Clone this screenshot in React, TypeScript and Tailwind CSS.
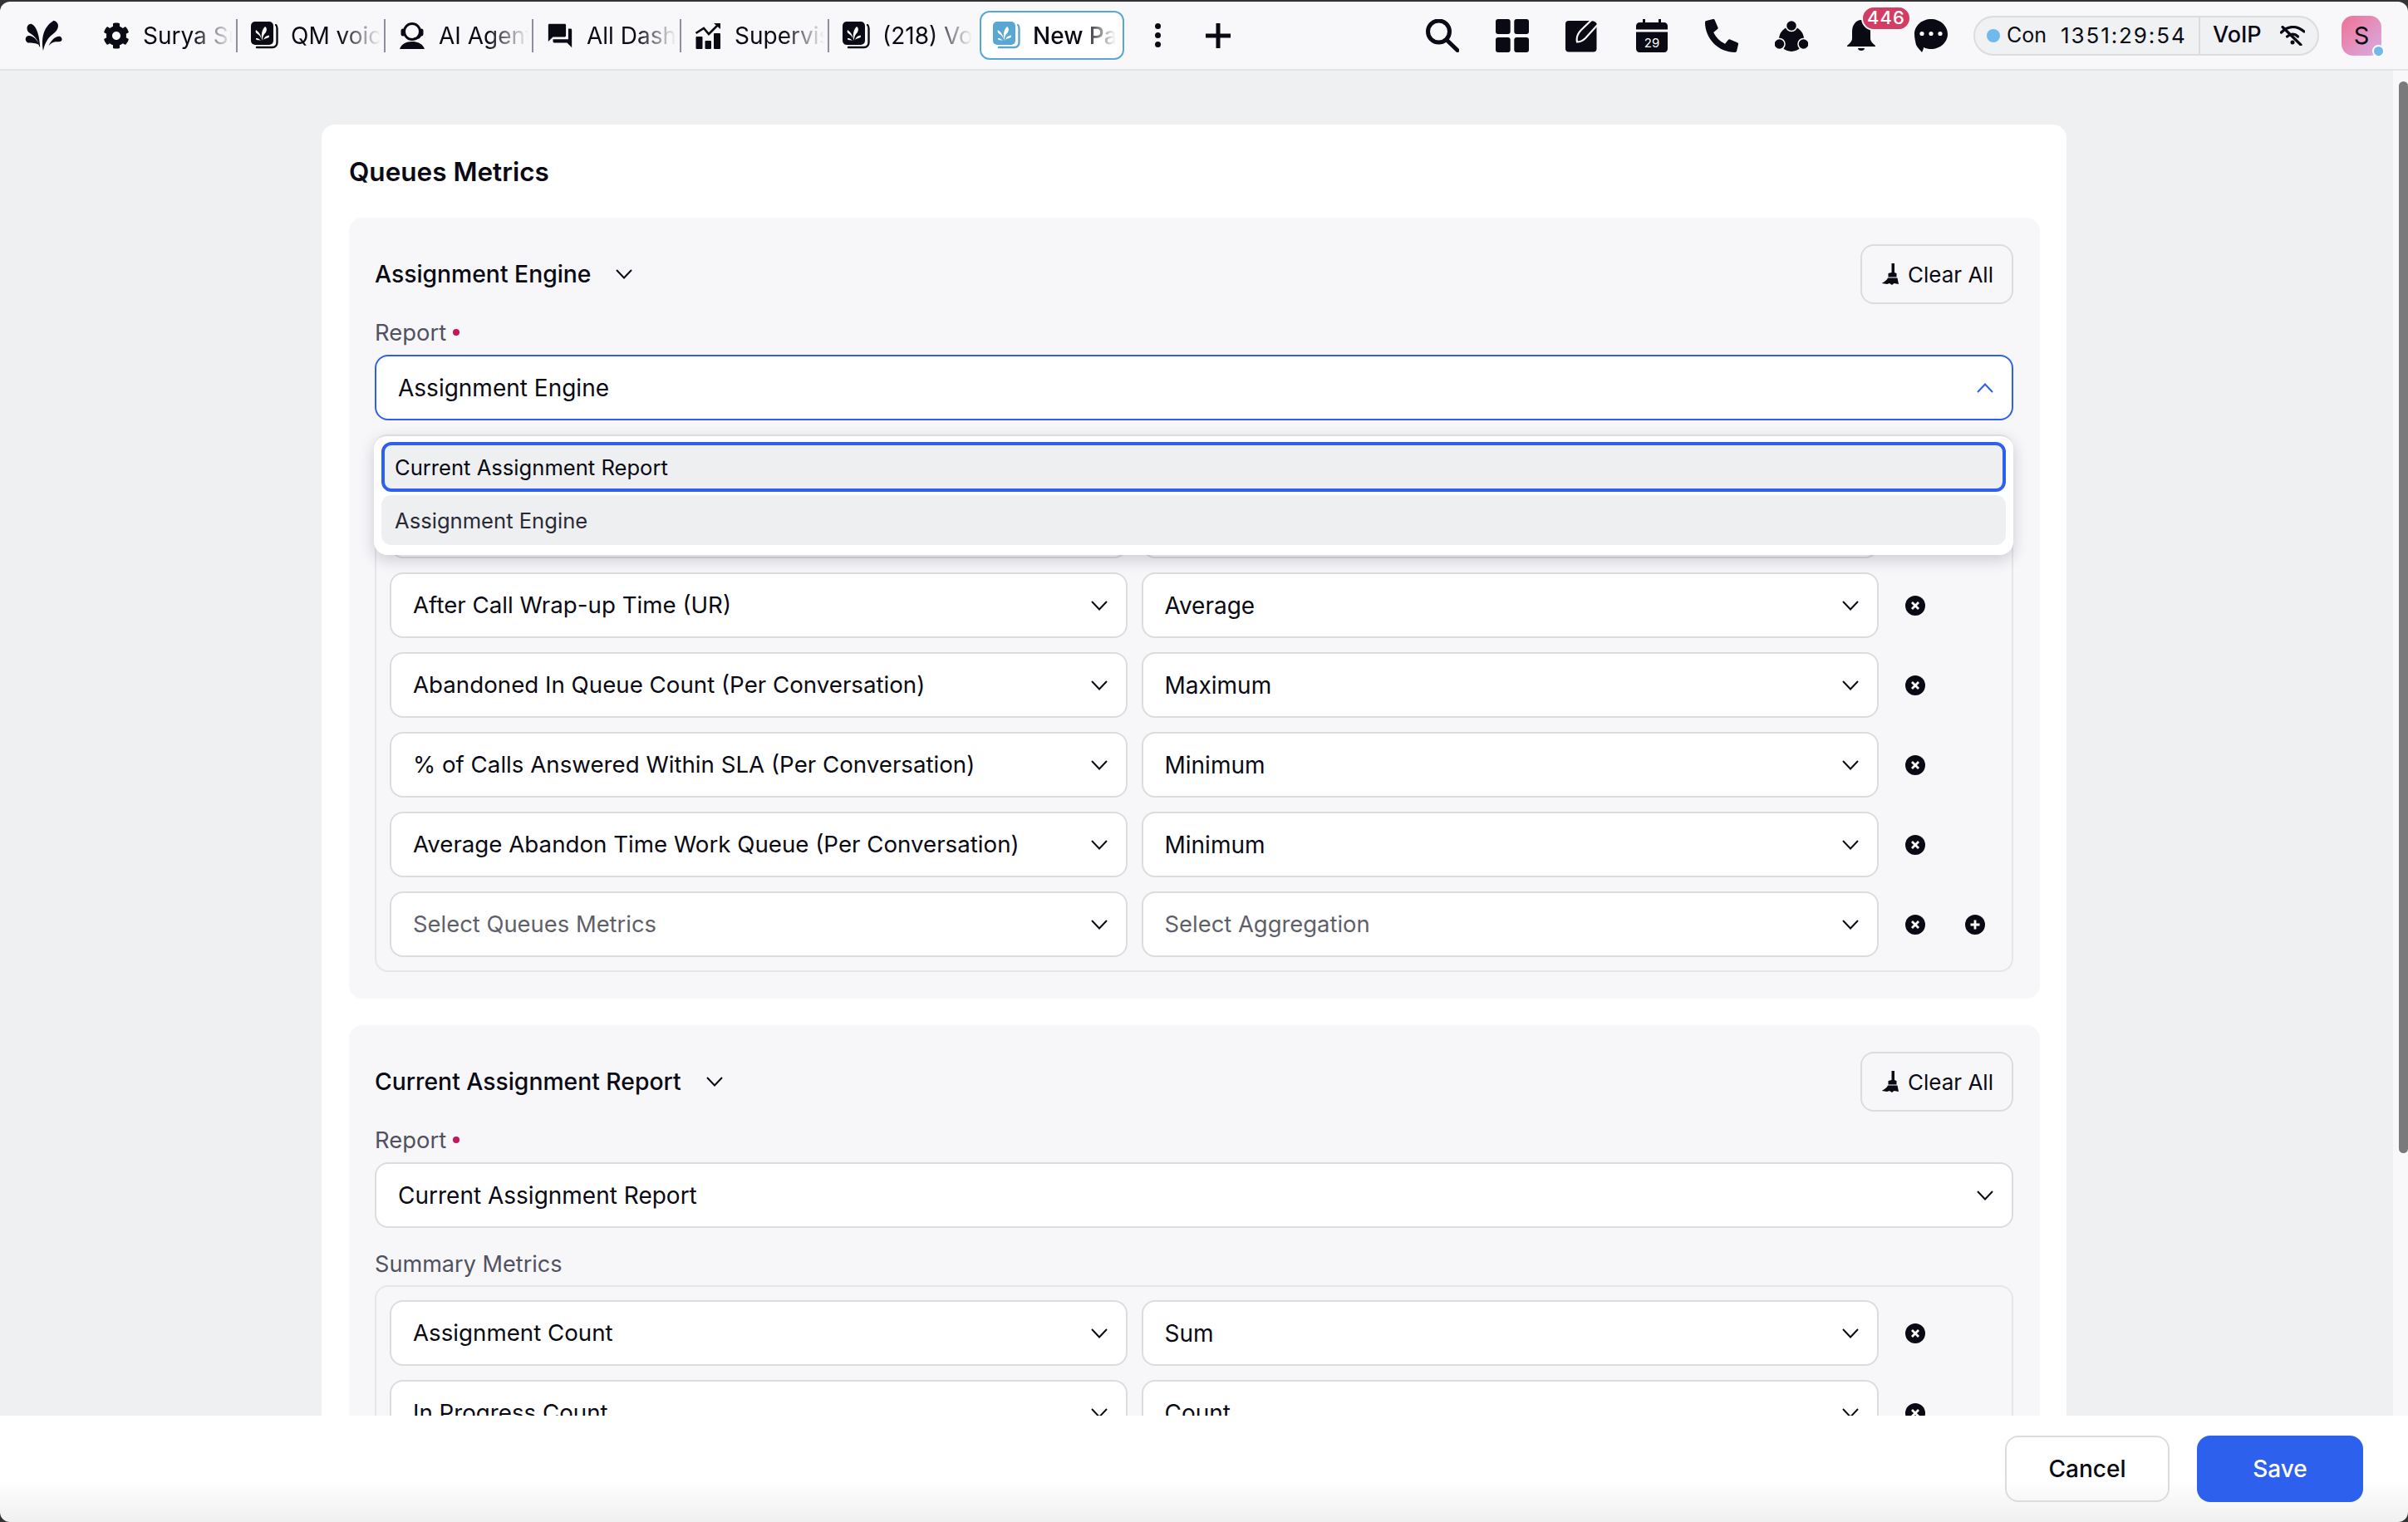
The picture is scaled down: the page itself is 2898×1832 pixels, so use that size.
import { FaCog, FaPhoneAlt } from 'react-icons/fa';
import { MdForum } from 'react-icons/md';

const BookIcon = ({ color = '#0a0a14' }: { color?: string }) => (
  <svg viewBox="0 0 33 33" className="h-[33px] w-[33px] shrink-0">
    <rect x="0" y="0" width="27" height="28" rx="5" fill={color} />
    <path d="M30 4c1 1 1.5 2 1.5 4v17c0 3-2 6-6 6H7" fill="none" stroke={color} strokeWidth="2.4" strokeLinecap="round" />
    <path d="M13.5 23C12 16 13 10 17 6c3 2 2 6 0 8-2 2-3 5-3.500 9z" fill="#fff" />
    <path d="M12.500 21C12 16 10 13 6 10c-1 2 0 4 2 5 2 1 3.500 3 4.500 6z" fill="#fff" />
    <path d="M15 22c1-3 3-5 6.500-5.500 1 1 .5 2.500-1 3-2 .5-4 1-5.500 2.500zM12 23c-1.500-2-3.500-3.500-6-3-.5 1.500 1 2.500 2.500 2.200 1.200-.2 2.500 0 3.500.8z" fill="#fff" />
  </svg>
);

const AgentIcon = () => (
  <svg viewBox="0 0 30 32" className="h-[32px] w-[30px] shrink-0">
    <circle cx="15" cy="11" r="9.500" fill="none" stroke="#0a0a14" strokeWidth="3" />
    <rect x="1.500" y="7.500" width="5" height="9" rx="2.500" fill="#0a0a14" />
    <rect x="23.500" y="7.500" width="5" height="9" rx="2.500" fill="#0a0a14" />
    <path d="M25 15c0 3-3 4.500-8 4.500" fill="none" stroke="#0a0a14" strokeWidth="2.400" />
    <path d="M0 32c2-6 8-9 15-9s13 3 15 9z" fill="#0a0a14" />
  </svg>
);

const SupervisorIcon = () => (
  <svg viewBox="0 0 30 32" className="h-[32px] w-[30px] shrink-0">
    <rect x="0.500" y="17" width="8" height="15" rx="1" fill="#0a0a14" />
    <rect x="11.500" y="22" width="7.500" height="10" rx="1" fill="#0a0a14" />
    <rect x="22" y="13" width="8" height="19" rx="1" fill="#0a0a14" />
    <path d="M0.500 13L10 7l6 7L27 3" fill="none" stroke="#0a0a14" strokeWidth="2.600" />
    <path d="M22 1h8v7z" fill="#0a0a14" />
  </svg>
);

const LogoIcon = () => (
  <svg viewBox="50 40 150 120" className="h-[38px] w-[48px] shrink-0" fill="#0a0a14">
    <path d="M125 157c-7-37-5-88 40-115 24 7 22 33-3 52-20 15-31 35-37 63z" />
    <path d="M110 142c-4-30-20-42-40-55-12-12-7-33 10-32 22 10 30 47 33 87h-3z" />
    <path d="M112 138c-15-14-30-8-45-11-14-7-11-27 4-27 17 0 32 17 41 38z" />
    <path d="M145 140c10-21 26-40 45-37 12 9 6 22-9 20-15-1-26 3-36 17z" />
  </svg>
);

const SearchIcon = () => (
  <svg viewBox="0 0 40 40" className="h-[40px] w-[40px]" fill="none" stroke="#0a0a14" strokeWidth="5" strokeLinecap="round">
    <circle cx="15.500" cy="15" r="13" />
    <path d="M25 25l13 12.500" />
  </svg>
);

const GridIcon = () => (
  <svg viewBox="0 0 40 40" className="h-[40px] w-[40px]" fill="#0a0a14">
    <rect width="17.700" height="18" rx="3" />
    <rect x="22.300" width="17.700" height="18" rx="3" />
    <rect y="22" width="17.700" height="18" rx="3" />
    <rect x="22.300" y="22" width="17.700" height="18" rx="3" />
  </svg>
);

const EditIcon = () => (
  <svg viewBox="0 0 40 40" className="h-[40px] w-[40px]">
    <rect x="0" y="2" width="37.500" height="37.500" rx="4" fill="#0a0a14" />
    <path d="M14 27.500c-1.500-7 1.500-11 5-14.500L31 1.500c3-1.500 8 2 8 5L24 23c-3 3-6 4.500-10 4.500z" fill="#0a0a14" stroke="#f8f8fb" strokeWidth="2.200" />
  </svg>
);

const CalendarIcon = () => (
  <svg viewBox="0 0 40 40" className="h-[40px] w-[40px]">
    <path d="M9 0h3v5H9zM28 0h3v5h-3z" fill="#0a0a14" />
    <path d="M1 8c0-2 2-4 4-4h30c2 0 4 2 4 4v4.500H1z" fill="#0a0a14" />
    <path d="M1 15.500h38V36c0 2-2 4-4 4H5c-2 0-4-2-4-4z" fill="#0a0a14" />
    <text x="20" y="33.500" textAnchor="middle" fontSize="15" fill="#fff">29</text>
  </svg>
);

const TeamIcon = () => (
  <svg viewBox="0 0 40 40" className="h-[40px] w-[40px]" fill="#0a0a14" stroke="#f8f8fb" strokeWidth="1.500">
    <circle cx="20" cy="24" r="15" stroke="none" />
    <circle cx="20" cy="8" r="6.500" />
    <circle cx="5.500" cy="30" r="6.500" />
    <circle cx="34.500" cy="30" r="6.500" />
  </svg>
);

const BellIcon = () => (
  <svg viewBox="0 0 34 38" className="h-[38px] w-[34px]" fill="#0a0a14">
    <path d="M17 0C10 0 6 7 6 14v8c0 4-3 6-6 9v1h34v-1c-3-3-6-5-6-9v-8c0-7-4-14-11-14z" />
    <path d="M13 34h8c0 4-8 4-8 0z" />
  </svg>
);

const ChatIcon = () => (
  <svg viewBox="0 0 40 40" className="h-[40px] w-[40px]">
    <path d="M20 0c11 0 20 8 20 18s-9 18-20 18c-3 0-6-.5-9-2 0 2-1 4-2 6-2-3-5-5-7-9-1-4-2-9-2-13C0 8 9 0 20 0z" fill="#0a0a14" />
    <circle cx="9" cy="17.500" r="2.600" fill="#fff" />
    <circle cx="20" cy="17.500" r="2.600" fill="#fff" />
    <circle cx="31" cy="17.500" r="2.600" fill="#fff" />
  </svg>
);

const WifiOffIcon = () => (
  <svg viewBox="0 0 30 24" className="h-[24px] w-[30px]" fill="none" stroke="#0a0a14" strokeWidth="3.200" strokeLinecap="round">
    <path d="M1.500 8C10-.5 20-.5 29 7" />
    <path d="M8.500 13c5-4 9-4 13 0" />
    <circle cx="15" cy="20" r="2.500" fill="#0a0a14" stroke="none" />
    <path d="M3 1.500L25 23" />
  </svg>
);

const BroomIcon = () => (
  <svg viewBox="0 0 20 26" className="h-[26px] w-[20px] shrink-0" fill="#0a0a14">
    <path d="M11.500 0h3.500v11l2.500 1v4.500H7.500V12l4-1z" />
    <path d="M7 17.500h11.500L20 25l-5.500-1-2.500 2-3-2-3 1-6.500-1c4-2 6.500-4 7.500-6.500z" />
  </svg>
);

const Chevron = ({ up = false, blue = false }: { up?: boolean; blue?: boolean }) => (
  <svg viewBox="0 0 20 12" className="h-[12px] w-[20px] shrink-0" fill="none" stroke={blue ? '#2d60ec' : '#0a0a14'} strokeWidth="2">
    <path d={up ? 'M1 11l9-9.500 9 9.500' : 'M1 1l9 9.500 9-9.500'} />
  </svg>
);

const CircleButton = ({ plus = false }: { plus?: boolean }) => (
  <svg viewBox="0 0 24 24" className="h-[24px] w-[24px] shrink-0">
    <circle cx="12" cy="12" r="12" fill="#0a0a14" />
    <path d={plus ? 'M12 6.500v11M6.500 12h11' : 'M8 8l8 8M16 8l-8 8'} stroke="#fff" strokeWidth="2.800" fill="none" />
  </svg>
);

const RedDot = () => <span className="ml-[8px] h-[8px] w-[8px] rounded-full bg-[#c2185b]" />;

type SelectProps = {
  value: string;
  textClass: string;
};

const Select = ({ value, textClass }: SelectProps) => (
  <div className="flex h-[79px] flex-1 items-center justify-between rounded-[16px] border-2 border-[#dcdcdf] bg-white pl-[26px] pr-[22px]">
    <span className={textClass}>{value}</span>
    <Chevron />
  </div>
);

type Row = {
  metric: string;
  aggregation: string;
  placeholder?: boolean;
};

const MetricsBox = ({ rows, last }: { rows: Row[]; last?: boolean }) => (
  <div className="flex flex-col gap-[17px] rounded-[16px] border-2 border-[#e6e6e9] p-[16px]">
    {rows.map((row, index) => (
      <div key={index} className="flex items-center">
        <div className="flex w-[1792px] gap-[17px]">
          <Select
            value={row.metric}
            textClass={row.placeholder ? 'text-[27.400px] text-[#5f5f6c]' : 'text-[27.700px] text-[#0a0a14]'}
          />
          <Select
            value={row.aggregation}
            textClass={row.placeholder ? 'text-[27.400px] text-[#5f5f6c]' : 'text-[28px] text-[#0a0a14]'}
          />
        </div>
        <div className="ml-[32px]">
          <CircleButton />
        </div>
        {last && index === rows.length - 1 && (
          <div className="ml-[48px]">
            <CircleButton plus />
          </div>
        )}
      </div>
    ))}
  </div>
);

type SectionProps = {
  title: string;
  report: string;
  open?: boolean;
  rows: Row[];
  last?: boolean;
};

const Section = ({ title, report, open, rows, last }: SectionProps) => (
  <section className="relative rounded-[16px] bg-[#f7f7fa] pb-[32px] pl-[31px] pr-[32px] pt-[32px]">
    <div className="flex h-[72px] items-center justify-between">
      <div className="flex items-center">
        <h2 className="text-[28.300px] font-medium text-[#0a0a14]">{title}</h2>
        <div className="ml-[30px]">
          <Chevron />
        </div>
      </div>
      <button className="flex h-[72px] w-[184px] items-center justify-center gap-[11px] rounded-[16px] border-2 border-[#dcdcdf] pl-[2px] text-[26px] text-[#0a0a14]">
        <BroomIcon />
        Clear All
      </button>
    </div>
    <div className="flex h-[61px] items-center pt-[7px] text-[27.400px] leading-[28px] text-[#51515f]">
      Report
      <RedDot />
    </div>
    <div
      className={
        open
          ? 'flex h-[79px] items-center justify-between rounded-[16px] border-2 border-[#2d60ec] bg-white pl-[26px] pr-[22px]'
          : 'flex h-[79px] items-center justify-between rounded-[16px] border-2 border-[#dcdcdf] bg-white pl-[26px] pr-[22px]'
      }
    >
      <span className="text-[28px] text-[#0a0a14]">{report}</span>
      <Chevron up={open} blue={open} />
    </div>
    <div className="h-[69px] pt-[30px] text-[27.100px] leading-[28px] text-[#51515f]">{!open && 'Summary Metrics'}</div>
    <MetricsBox rows={rows} last={last} />
    {open && (
      <div className="absolute left-[30px] top-[261px] flex h-[145px] w-[1973px] flex-col gap-[4px] rounded-[16px] border-t-2 border-[#dcdcdf] bg-white px-[9px] pt-[7px] shadow-[0_6px_18px_rgba(30,30,50,0.2)]">
        <div className="flex h-[60px] items-center rounded-[12px] border-4 border-[#2d60ec] bg-[#eeeff1] pl-[12px] pt-[2px] text-[25.600px] text-[#0a0a14]">
          Current Assignment Report
        </div>
        <div className="flex h-[60px] items-center rounded-[12px] bg-[#eeeff1] pl-[16px] pt-[2px] text-[25.600px] text-[#2a2a36]">
          Assignment Engine
        </div>
      </div>
    )}
  </section>
);

type TabProps = {
  icon: React.ReactNode;
  label: string;
  separator?: boolean;
};

const Tab = ({ icon, label, separator = true }: TabProps) => (
  <div
    className={
      separator
        ? 'flex h-[40px] w-[178px] items-center gap-[15px] border-r-2 border-[#8e8e9e] pl-[15px]'
        : 'flex h-[40px] w-[178px] items-center gap-[15px] pl-[15px]'
    }
  >
    <div className="flex w-[34px] shrink-0 justify-center">{icon}</div>
    <span className="w-[108px] overflow-hidden whitespace-nowrap text-[28px] text-[#0a0a14] [mask-image:linear-gradient(to_right,black_55%,transparent)]">
      {label}
    </span>
  </div>
);

const TopBar = () => (
  <header className="flex h-[83px] shrink-0 items-center border-b-2 border-[#e5e5e8] bg-[#f8f8fb] pl-[28px]">
    <LogoIcon />
    <div className="ml-[32px] flex items-center">
      <Tab icon={<FaCog className="h-[32px] w-[32px] text-[#0a0a14]" />} label="Surya Su" />
      <Tab icon={<BookIcon />} label="QM voic" />
      <Tab icon={<AgentIcon />} label="AI Agent" />
      <Tab icon={<MdForum className="h-[40px] w-[40px] text-[#0a0a14]" />} label="All Dash" />
      <Tab icon={<SupervisorIcon />} label="Supervis" />
      <Tab icon={<BookIcon />} label="(218) Vo" separator={false} />
    </div>
    <div className="ml-[3px] flex h-[59px] w-[174px] items-center gap-[15px] rounded-[12px] border-2 border-[#5ba7d3] bg-white pl-[14px]">
      <BookIcon color="#5ba7d3" />
      <span className="w-[100px] overflow-hidden whitespace-nowrap text-[28px] font-medium text-[#0a0a14] [mask-image:linear-gradient(to_right,black_60%,transparent)]">
        New Pa
      </span>
    </div>
    <div className="ml-[37px] flex flex-col gap-[4px]">
      <span className="h-[7px] w-[7px] rounded-full bg-[#0a0a14]" />
      <span className="h-[7px] w-[7px] rounded-full bg-[#0a0a14]" />
      <span className="h-[7px] w-[7px] rounded-full bg-[#0a0a14]" />
    </div>
    <svg viewBox="0 0 30 30" className="ml-[54px] h-[30px] w-[30px]" stroke="#0a0a14" strokeWidth="5">
      <path d="M15 0v30M0 15h30" />
    </svg>
    <div className="ml-[235px] flex items-center gap-[44px]">
      <SearchIcon />
      <GridIcon />
      <EditIcon />
      <CalendarIcon />
      <FaPhoneAlt className="h-[40px] w-[40px] text-[#0a0a14]" />
      <TeamIcon />
      <div className="relative flex w-[40px] justify-center">
        <BellIcon />
        <span className="absolute left-[20px] top-[-17px] flex h-[30px] w-[60px] items-center justify-center rounded-full border-2 border-[#f8f8fb] bg-[#d23d63] text-[22px] font-medium tracking-wider text-white">
          446
        </span>
      </div>
      <ChatIcon />
    </div>
    <div className="ml-[31px] flex h-[48px] w-[416px] items-center rounded-full border-2 border-[#dcdcdf] bg-[#f0f1f3]">
      <div className="flex h-full w-[271px] items-center border-r-2 border-[#dcdcdf] pl-[14px] text-[26px] text-[#0a0a14]">
        <span className="h-[16px] w-[16px] rounded-full bg-[#6fb9ec]" />
        <span className="ml-[8px] text-[25px]">Con</span>
        <span className="ml-[17px] tracking-[1.900px]">1351:29:54</span>
      </div>
      <span className="ml-[15px] text-[27px] font-medium text-[#0a0a14]">VoIP</span>
      <div className="ml-[22px]">
        <WifiOffIcon />
      </div>
    </div>
    <div className="relative ml-[27px] flex h-[48px] w-[48px] items-center justify-center rounded-[14px] bg-gradient-to-br from-[#ee6f94] to-[#d4ade6] text-[29px] text-[#0a0a14]">
      S
      <span className="absolute bottom-[-2px] right-[-4px] h-[15px] w-[15px] rounded-full border-2 border-white bg-[#6fb9ec]" />
    </div>
  </header>
);

const engineRows: Row[] = [
  { metric: '', aggregation: '' },
  { metric: 'After Call Wrap-up Time (UR)', aggregation: 'Average' },
  { metric: 'Abandoned In Queue Count (Per Conversation)', aggregation: 'Maximum' },
  { metric: '% of Calls Answered Within SLA (Per Conversation)', aggregation: 'Minimum' },
  { metric: 'Average Abandon Time Work Queue (Per Conversation)', aggregation: 'Minimum' },
  { metric: 'Select Queues Metrics', aggregation: 'Select Aggregation', placeholder: true },
];

const currentRows: Row[] = [
  { metric: 'Assignment Count', aggregation: 'Sum' },
  { metric: 'In Progress Count', aggregation: 'Count' },
];

const App = () => {
  return (
    <div className="h-[1832px] w-[2898px] overflow-hidden bg-[#333] pt-[2px] [font-family:Inter,sans-serif]">
      <div className="flex h-[1830px] flex-col overflow-hidden rounded-[12px]">
        <TopBar />
        <div className="flex min-h-0 flex-1">
          <main className="min-w-0 flex-1 overflow-hidden bg-[#eff0f2] pl-[387px] pt-[65px]">
            <div className="w-[2100px] rounded-[16px] bg-white pl-[33px] pr-[32px]">
              <h1 className="flex h-[112px] items-center pt-[2px] text-[31.500px] font-semibold text-[#0a0a14]">Queues Metrics</h1>
              <div className="flex flex-col gap-[32px]">
                <Section title="Assignment Engine" report="Assignment Engine" open rows={engineRows} last />
                <Section title="Current Assignment Report" report="Current Assignment Report" rows={currentRows} />
              </div>
            </div>
          </main>
          <aside className="w-[18px] shrink-0 border-l-2 border-[#f8f8fa] bg-[#f8f8fb] pl-[5px] pt-[13px]">
            <div className="h-[1290px] w-[11px] rounded-[6px] bg-[#7a7a7a]" />
          </aside>
        </div>
        <footer className="flex h-[128px] shrink-0 justify-end gap-[33px] bg-gradient-to-b from-white from-60% to-[#f0f0f1] pr-[54px] pt-[24px]">
          <button className="h-[80px] w-[198px] rounded-[16px] border-2 border-[#dcdcdf] text-[28px] font-medium text-[#0a0a14]">
            Cancel
          </button>
          <button className="h-[80px] w-[200px] rounded-[16px] bg-[#2d60ec] text-[28px] font-medium text-white">Save</button>
        </footer>
      </div>
    </div>
  );
};

export default App;
